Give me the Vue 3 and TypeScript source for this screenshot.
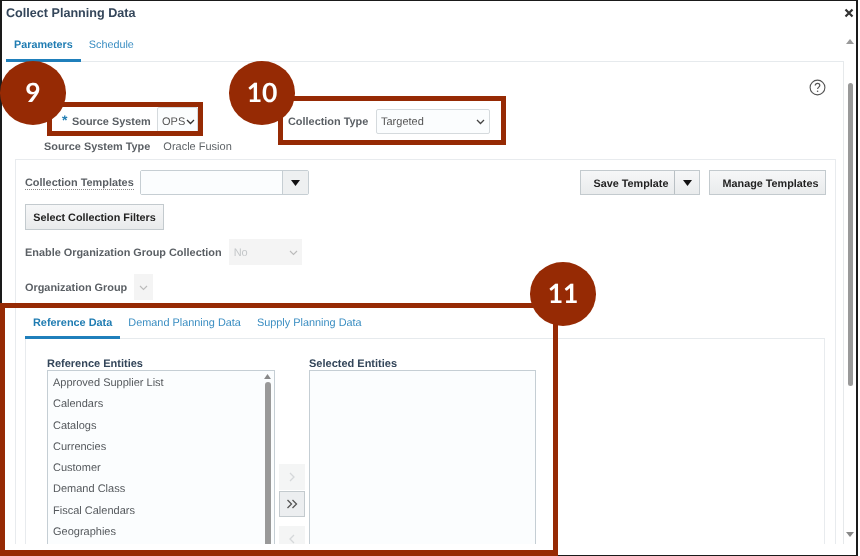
<script setup lang="ts">
const entities: string[] = [
  'Approved Supplier List',
  'Calendars',
  'Catalogs',
  'Currencies',
  'Customer',
  'Demand Class',
  'Fiscal Calendars',
  'Geographies',
]
const boxes = [
  { cls: 'box-9' },
  { cls: 'box-10' },
  { cls: 'box-11' },
]
const badges = [
  { cls: 'badge-9', text: '9' },
  { cls: 'badge-10', text: '10' },
  { cls: 'badge-11', text: '11' },
]
</script>

<template>
  <div class="screen">
    <div class="dialog">
      <header class="title-row">
        <h1 class="title">Collect Planning Data</h1>
        <svg class="close" width="10" height="10" viewBox="0 0 10 10">
          <path d="M1.5 1.5 8.5 8.5M8.5 1.5 1.5 8.5" stroke="#333" stroke-width="2.2" fill="none" />
        </svg>
      </header>

      <div class="main">
        <div class="content">
          <nav class="tabs">
            <span class="tab active">Parameters</span>
            <span class="tab">Schedule</span>
          </nav>

          <section class="body">
            <div class="source-row">
              <span class="req">*</span>
              <span class="label source-label">Source System</span>
              <span class="select ops">OPS
                <svg width="9" height="6" viewBox="0 0 9 6"><path d="M1 1 4.5 4.5 8 1" stroke="#333" stroke-width="1.3" fill="none" /></svg>
              </span>
              <span class="label type-label">Collection Type</span>
              <span class="select type">Targeted
                <svg width="9" height="6" viewBox="0 0 9 6"><path d="M1 1 4.5 4.5 8 1" stroke="#444" stroke-width="1.3" fill="none" /></svg>
              </span>
              <svg class="help" width="17" height="17" viewBox="0 0 17 17">
                <circle cx="8.5" cy="8.5" r="7.4" stroke="#555" stroke-width="1.1" fill="none" />
                <path d="M6.2 6.6C6.2 5.2 7.2 4.4 8.5 4.4 9.9 4.4 10.8 5.3 10.8 6.4 10.8 8 8.6 8.2 8.6 10" stroke="#555" stroke-width="1.2" fill="none" />
                <circle cx="8.6" cy="12.3" r=".8" fill="#555" />
              </svg>
            </div>

            <div class="type-row">
              <span class="label">Source System Type</span>
              <span class="value">Oracle Fusion</span>
            </div>

            <div class="panel">
              <div class="template-row">
                <span class="label underlined">Collection Templates</span>
                <span class="combo">
                  <span class="combo-input"></span>
                  <span class="combo-btn">
                    <svg width="9" height="6" viewBox="0 0 9 6"><path d="M0 0H9L4.5 6Z" fill="#111" /></svg>
                  </span>
                </span>
                <span class="btn save">
                  <span class="save-text">Save Template</span>
                  <span class="save-arrow">
                    <svg width="9" height="6" viewBox="0 0 9 6"><path d="M0 0H9L4.5 6Z" fill="#111" /></svg>
                  </span>
                </span>
                <span class="btn manage">Manage Templates</span>
              </div>

              <span class="btn filters">Select Collection Filters</span>

              <div class="form-row">
                <span class="label">Enable Organization Group Collection</span>
                <span class="disabled enable">No
                  <svg width="9" height="6" viewBox="0 0 9 6"><path d="M1 1 4.5 4.5 8 1" stroke="#bbb" stroke-width="1.1" fill="none" /></svg>
                </span>
              </div>

              <div class="form-row">
                <span class="label">Organization Group</span>
                <span class="disabled org">
                  <svg width="9" height="6" viewBox="0 0 9 6"><path d="M1 1 4.5 4.5 8 1" stroke="#bbb" stroke-width="1.1" fill="none" /></svg>
                </span>
              </div>

              <nav class="tabs sub-tabs">
                <span class="tab active">Reference Data</span>
                <span class="tab">Demand Planning Data</span>
                <span class="tab">Supply Planning Data</span>
              </nav>

              <div class="shuttle-panel">
                <div class="column">
                  <div class="list-title">Reference Entities</div>
                  <div class="list">
                    <ul class="items">
                      <li v-for="item in entities" :key="item">{{ item }}</li>
                    </ul>
                    <div class="list-scroll">
                      <svg width="7" height="5" viewBox="0 0 7 5"><path d="M3.5 0 7 5H0Z" fill="#888" /></svg>
                      <span class="list-thumb"></span>
                    </div>
                  </div>
                </div>

                <div class="shuttle">
                  <span class="shift off">
                    <svg width="8" height="10" viewBox="0 0 8 10"><path d="M2 1 6 5 2 9" stroke="#d5d8da" stroke-width="1.3" fill="none" /></svg>
                  </span>
                  <span class="shift on">
                    <svg width="12" height="10" viewBox="0 0 12 10"><path d="M1.5 1 5.5 5 1.5 9M6.5 1 10.5 5 6.5 9" stroke="#555" stroke-width="1.3" fill="none" /></svg>
                  </span>
                  <span class="shift off back">
                    <svg width="8" height="10" viewBox="0 0 8 10"><path d="M6 1 2 5 6 9" stroke="#d5d8da" stroke-width="1.3" fill="none" /></svg>
                  </span>
                </div>

                <div class="column selected">
                  <div class="list-title">Selected Entities</div>
                  <div class="list"></div>
                </div>
              </div>
            </div>
          </section>
        </div>

        <aside class="scrollbar">
          <svg class="arrow-up" width="8" height="5" viewBox="0 0 8 5"><path d="M4 0 8 5H0Z" fill="#999" /></svg>
          <span class="thumb"></span>
          <svg class="arrow-down" width="8" height="5" viewBox="0 0 8 5"><path d="M0 0H8L4 5Z" fill="#888" /></svg>
        </aside>
      </div>
    </div>

    <div v-for="b in boxes" :key="b.cls" class="mark" :class="b.cls"></div>
    <div v-for="b in badges" :key="b.cls" class="badge" :class="b.cls">{{ b.text }}</div>
  </div>
</template>

<style scoped>
.screen {
  position: relative;
  width: 860px;
  height: 556px;
  overflow: hidden;
  background: #fff;
  font-family: "Liberation Sans", Arial, sans-serif;
  font-size: 11px;
  color: #555;
  text-rendering: geometricPrecision;
  filter: blur(0.35px);
}
.dialog {
  box-sizing: border-box;
  width: 858px;
  height: 556px;
  border: solid #1a1a1a;
  border-width: 1px 2px 1px;
  padding-left: 4px;
  background: #fff;
}
.title-row {
  display: flex;
  align-items: center;
  justify-content: space-between;
  box-sizing: border-box;
  height: 22px;
  padding: 1px 2px 0 0;
}
.title {
  margin: 0;
  font-size: 12.6px;
  font-weight: 700;
  color: #34465a;
}
.main {
  display: flex;
  height: 521px;
}
.content {
  width: 838px;
  flex: none;
}
.tabs {
  display: flex;
  box-sizing: border-box;
  height: 39px;
  border-bottom: 1px solid #e6eaed;
  color: #3b8ec2;
}
.tab {
  display: flex;
  align-items: center;
  box-sizing: border-box;
  padding: 8px 8px 0;
  margin-bottom: -1px;
  font-size: 10.8px;
  border-bottom: 3px solid transparent;
}
.tab.active {
  font-weight: 700;
  color: #1f7cb2;
  border-bottom-color: #1f7fbb;
}
.body {
  height: 482px;
  overflow: hidden;
  border-right: 1px solid #e6e9eb;
}
.label {
  padding-top: 2px;
  font-weight: 700;
  font-size: 10.9px;
  color: #5a5f64;
  white-space: nowrap;
}
.source-row {
  display: flex;
  align-items: flex-end;
  height: 55px;
  margin-top: 17px;
  padding-left: 56px;
}
.source-row > * {
  flex: none;
}
.req {
  height: 25px;
  line-height: 22px;
  width: 10px;
  color: #1f7cb2;
  font-size: 14px;
  font-weight: 700;
}
.source-label {
  line-height: 25px;
  width: 85px;
  margin-bottom: -1px;
}
.select {
  display: flex;
  align-items: center;
  justify-content: space-between;
  box-sizing: border-box;
  height: 25px;
  font-size: 11px;
  background: #fbfdfe;
  border: 1px solid #d5dadd;
  border-radius: 2px;
}
.select.ops {
  width: 41px;
  height: 27px;
  padding: 2px 2px 0 4px;
}
.type-label {
  line-height: 25px;
  margin: 0 0 -1px 90px;
  width: 88px;
}
.select.type {
  width: 114px;
  padding: 1px 4px 0;
}
.help {
  align-self: flex-start;
  margin-left: auto;
  margin-right: 17px;
}
.type-row {
  display: flex;
  align-items: center;
  gap: 13px;
  height: 14px;
  margin-top: 5px;
  padding-left: 38px;
}
.value {
  padding-top: 2px;
  font-size: 11px;
  color: #5f6468;
}
.panel {
  box-sizing: border-box;
  height: 400px;
  margin: 6px 7px 0 9px;
  padding: 10px 9px 0;
  border: 1px solid #e8ebee;
  border-bottom: 0;
}
.template-row {
  display: flex;
  align-items: center;
  height: 25px;
}
.underlined {
  padding-top: 1px;
  border-bottom: 1px dotted #888;
  line-height: 12px;
  margin: 1px 6px 0 0;
}
.combo {
  display: flex;
  height: 25px;
  width: 169px;
  box-sizing: border-box;
  border: 1px solid #c6ced3;
  border-radius: 2px;
}
.combo-input {
  flex: 1;
  background: #fbfdfe;
}
.combo-btn {
  display: flex;
  align-items: center;
  justify-content: center;
  width: 25px;
  background: #eef0f1;
  border-left: 1px solid #c6ced3;
}
.btn {
  display: inline-flex;
  align-items: center;
  justify-content: center;
  box-sizing: border-box;
  height: 25px;
  background: linear-gradient(#f6f7f8, #e9ebec);
  border: 1px solid #c3cace;
  font-size: 10.8px;
  font-weight: 700;
  color: #222;
  white-space: nowrap;
}
.save {
  width: 120px;
  margin-left: auto;
}
.save-text {
  flex: 1;
  text-align: center;
  padding: 2px 0 0 7px;
}
.save-arrow {
  display: flex;
  align-items: center;
  justify-content: center;
  width: 24px;
  height: 100%;
  border-left: 1px solid #b9c0c4;
}
.manage {
  width: 117px;
  margin-left: 9px;
  padding: 2px 0 0 6px;
}
.filters {
  width: 139px;
  height: 26px;
  margin-top: 9px;
  padding-top: 2px;
}
.form-row {
  display: flex;
  align-items: center;
  height: 26px;
  margin-top: 9px;
}
.disabled {
  display: flex;
  align-items: center;
  justify-content: space-between;
  box-sizing: border-box;
  height: 26px;
  background: #f4f4f4;
  color: #c3c6c8;
  font-size: 11px;
  margin-left: 7px;
}
.enable {
  width: 73px;
  padding: 2px 4px 0 5px;
}
.org {
  width: 19px;
  padding-top: 2px;
  justify-content: center;
}
.sub-tabs {
  width: 800px;
  height: 36px;
  margin-top: 3px;
}
.sub-tabs .tab {
  padding: 6px 8px 0;
  font-size: 10.9px;
}
.shuttle-panel {
  display: flex;
  box-sizing: border-box;
  width: 800px;
  height: 220px;
  padding: 16px 0 0 21px;
  border: solid #e8ebee;
  border-width: 0 1px;
}
.column {
  width: 228px;
  flex: none;
}
.selected {
  width: 227px;
}
.list-title {
  height: 15px;
  line-height: 18px;
  font-size: 11px;
  font-weight: 700;
  color: #34465a;
}
.list {
  display: flex;
  box-sizing: border-box;
  height: 200px;
  background: #fbfdfe;
  border: 1px solid #c5ced4;
}
.items {
  flex: 1;
  margin: 0;
  padding: 2px 0 0 5px;
  list-style: none;
}
.items li {
  height: 21.3px;
  line-height: 21px;
  font-size: 11px;
  color: #55595d;
}
.list-scroll {
  display: flex;
  flex-direction: column;
  align-items: center;
  width: 7px;
  margin-right: 3px;
  padding-top: 3px;
}
.list-thumb {
  width: 6px;
  height: 190px;
  margin-top: 3px;
  border-radius: 3px;
  background: #999;
}
.shuttle {
  display: flex;
  flex-direction: column;
  flex: none;
  width: 26px;
  margin: 109px 4px 0;
}
.shift {
  display: flex;
  align-items: center;
  justify-content: center;
  box-sizing: border-box;
  height: 26px;
  flex: none;
}
.off {
  background: #f4f5f5;
}
.on {
  margin-top: 1px;
  background: #eceef0;
  border: 1px solid #c3cace;
}
.back {
  margin-top: 9px;
}
.scrollbar {
  display: flex;
  flex-direction: column;
  align-items: center;
  width: 8px;
  height: 521px;
  margin-left: 2px;
}
.arrow-up {
  margin-top: 16px;
}
.thumb {
  width: 5px;
  height: 303px;
  margin-top: 39px;
  border-radius: 3px;
  background: #999;
}
.arrow-down {
  margin-top: 146px;
}
.mark {
  position: absolute;
  box-sizing: border-box;
  border: 5px solid #962a04;
}
.box-9 {
  left: 47px;
  top: 102px;
  width: 156px;
  height: 34px;
}
.box-10 {
  left: 278px;
  top: 96px;
  width: 228px;
  height: 49px;
}
.box-11 {
  left: 0;
  top: 303px;
  width: 558px;
  height: 253px;
  border-bottom-width: 6px;
}
.badge {
  position: absolute;
  top: 61px;
  display: flex;
  align-items: center;
  justify-content: center;
  box-sizing: border-box;
  width: 66px;
  height: 63.5px;
  padding-bottom: 2px;
  border-radius: 50%;
  background: #962a04;
  color: #fff;
  font-family: Lato, "Open Sans", sans-serif;
  font-size: 26.5px;
  font-weight: 700;
}
.badge-9 {
  left: 0;
}
.badge-10 {
  left: 229px;
}
.badge-11 {
  left: 530px;
  top: 262px;
}
</style>
